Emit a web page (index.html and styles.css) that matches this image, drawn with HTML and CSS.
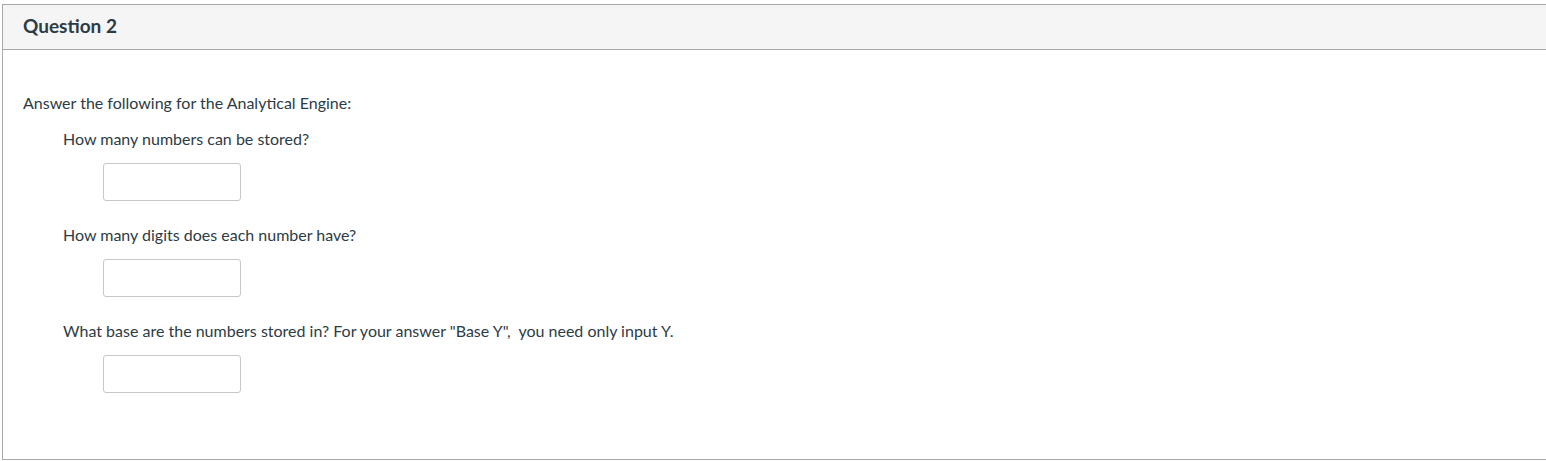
FILE: index.html
```html
<!DOCTYPE html>
<html lang="en">
<head>
<meta charset="utf-8">
<title>Question 2</title>
<link rel="stylesheet" href="styles.css">
</head>
<body>
<div class="card">
  <div class="card-header">
    <h2 class="card-title">Question 2</h2>
  </div>
  <div class="card-body">
    <p class="intro">Answer the following for the Analytical Engine:</p>
    <div class="item">
      <p class="prompt">How many numbers can be stored?</p>
      <input class="answer" type="text" aria-label="How many numbers can be stored?">
    </div>
    <div class="item">
      <p class="prompt">How many digits does each number have?</p>
      <input class="answer" type="text" aria-label="How many digits does each number have?">
    </div>
    <div class="item">
      <p class="prompt">What base are the numbers stored in? For your answer "Base Y",&nbsp; you need only input Y.</p>
      <input class="answer" type="text" aria-label="Base">
    </div>
  </div>
</div>
</body>
</html>
```
FILE: styles.css
```css
html, body {
  margin: 0;
  padding: 0;
  background: #ffffff;
}
body {
  font-family: Lato, "Open Sans", "Liberation Sans", sans-serif;
  color: #2d3b45;
  padding: 4px 0 0 2px;
}
.card {
  border: 1px solid #a8a8a8;
  border-right: 0;
}
.card-header {
  background: #f5f5f5;
  border-bottom: 1px solid #a8a8a8;
  height: 45px;
  box-sizing: border-box;
  display: flex;
  align-items: center;
  padding: 0 20px 3px;
}
.card-title {
  margin: 0;
  font-size: 19px;
  font-weight: 700;
  line-height: 22px;
  color: #2d3b45;
}
.card-body {
  padding: 43px 20px 66px;
}
.intro {
  margin: 0;
  font-size: 16px;
  line-height: 20px;
}
.item {
  padding-left: 40px;
  display: flex;
  flex-direction: column;
  align-items: flex-start;
  margin-top: 16px;
}
.item + .item {
  margin-top: 24px;
}
.prompt {
  margin: 0;
  font-size: 16px;
  line-height: 20px;
}
.answer {
  margin: 14px 0 0 40px;
  width: 138px;
  height: 38px;
  box-sizing: border-box;
  border: 1px solid #c7c7c7;
  border-radius: 3px;
  background: #fff;
  padding: 4px 6px;
  font: inherit;
}
```
